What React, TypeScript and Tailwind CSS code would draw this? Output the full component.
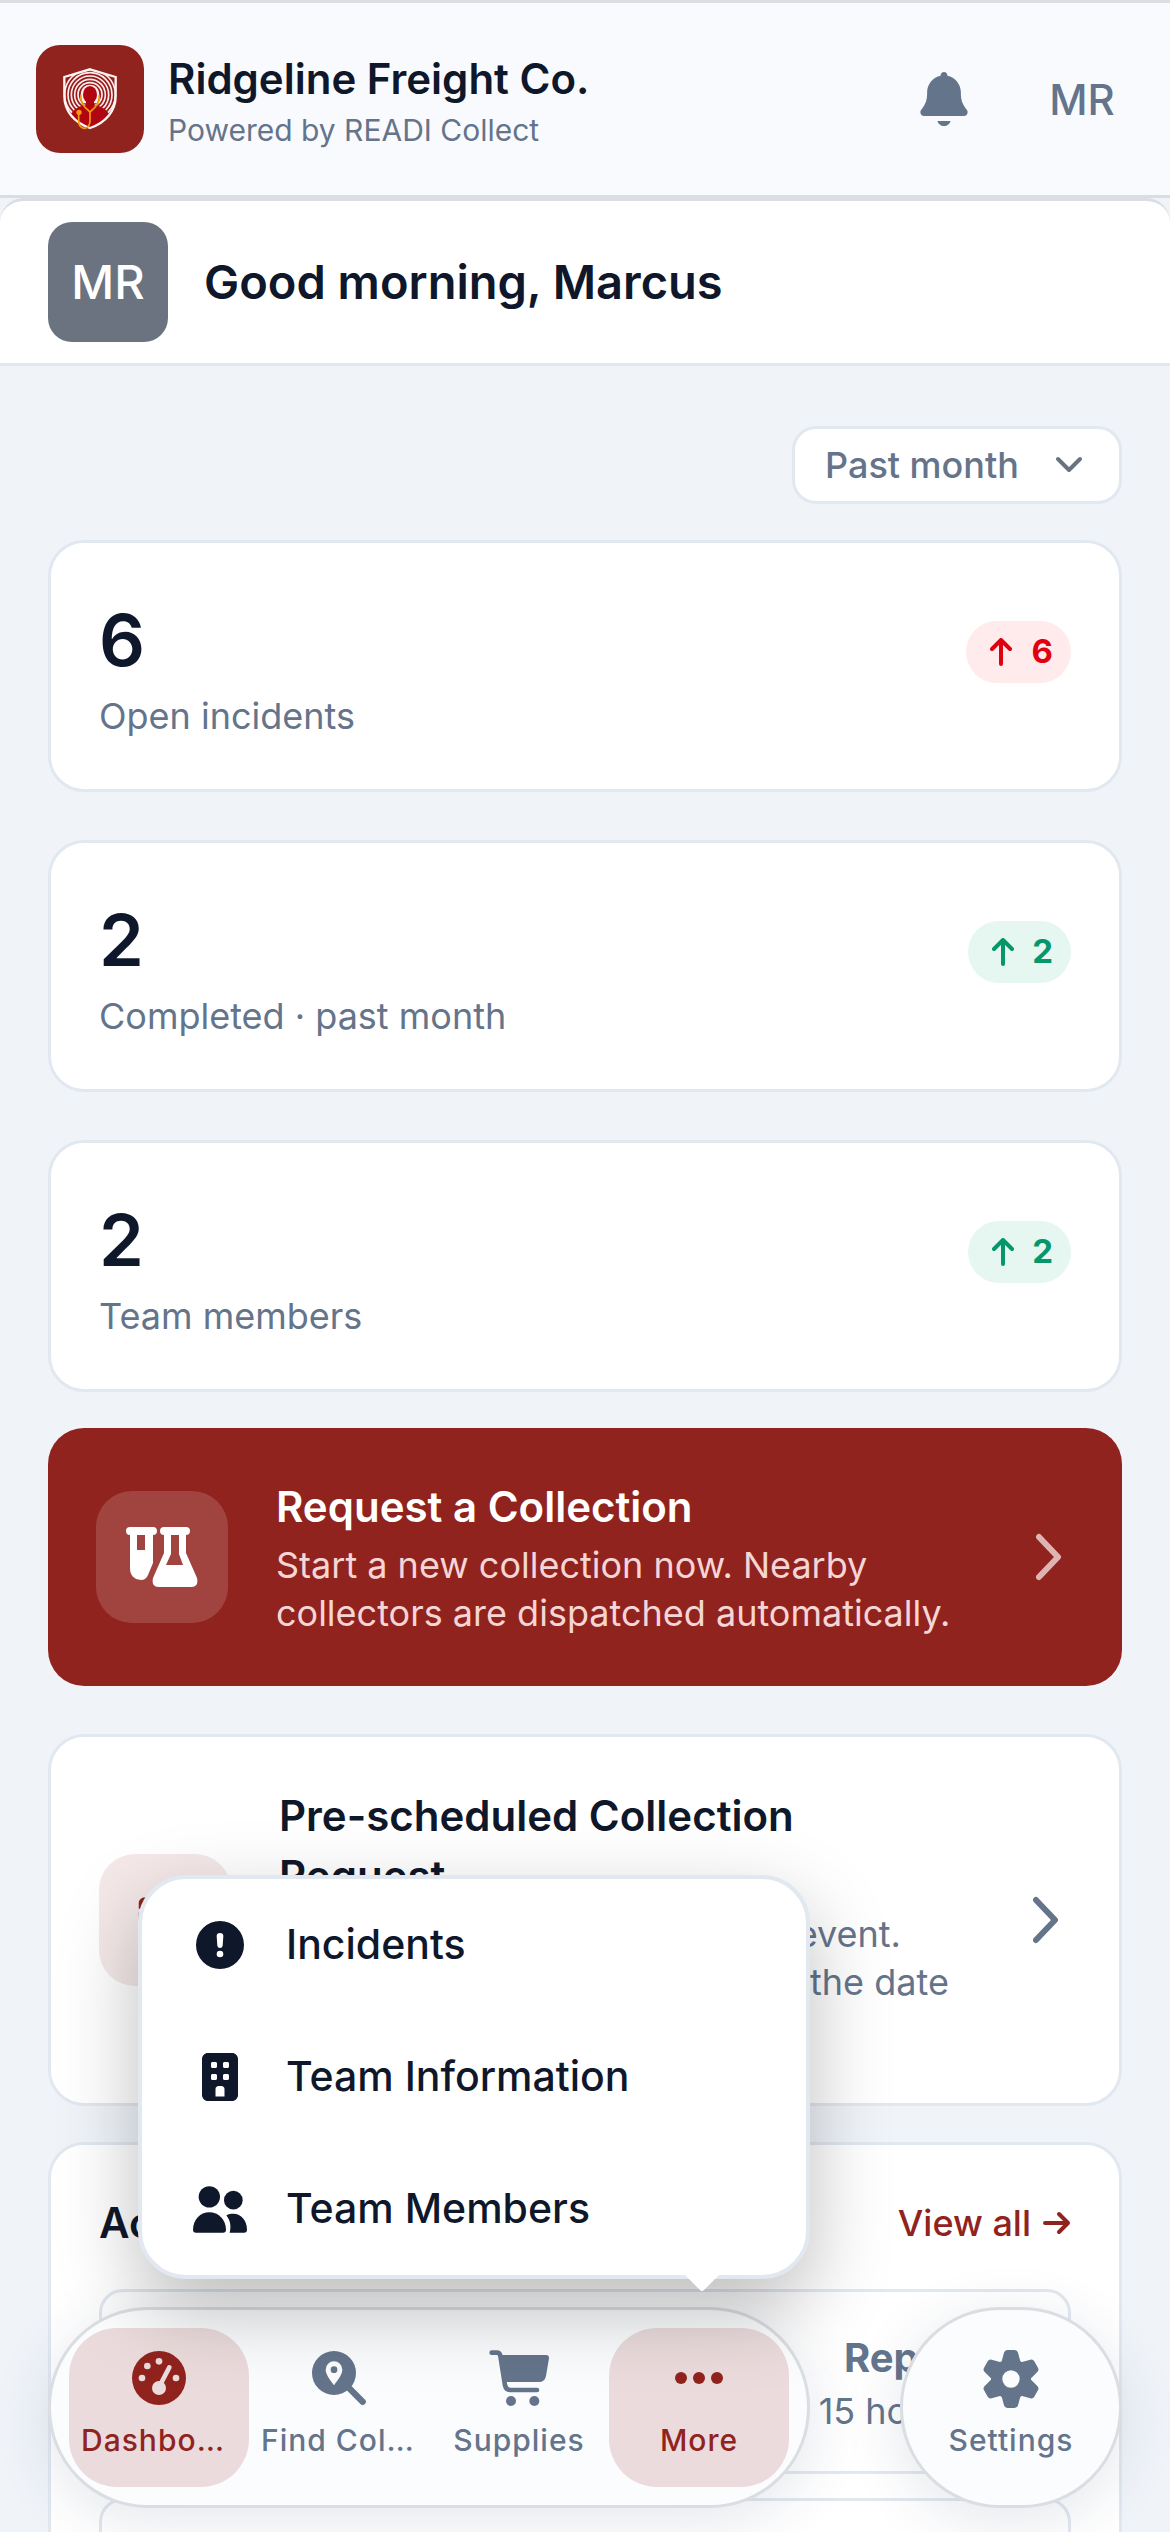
import type { ReactNode } from "react";
import { FaCalendarDays } from "react-icons/fa6";

const SHIELD = "M180 90 257 113V170C257 214 228 250 180 266 132 250 103 214 103 170V113Z";

function Shield() {
  return (
    <svg viewBox="99 86 162 186" className="h-[62px] w-[54px]" fill="none" aria-hidden="true">
      <defs>
        <clipPath id="shield-inner">
          <path d={SHIELD} />
        </clipPath>
      </defs>
      <path d={SHIELD} fill="#9a1a1a" />
      <g clipPath="url(#shield-inner)">
        <g stroke="#fdeeee" strokeWidth="5">
          <circle cx="180" cy="166" r="36" />
          <circle cx="180" cy="166" r="46" />
          <circle cx="180" cy="166" r="56" />
          <circle cx="180" cy="166" r="66" />
          <circle cx="180" cy="166" r="76" />
        </g>
        <path d="M112 262C116 224 132 206 160 198H200C228 206 244 224 248 262L180 280Z" fill="#b00612" />
        <path d="M160 192C146 172 150 136 180 136S214 172 200 192" fill="#fdeeee" />
        <ellipse cx="180" cy="166" rx="21" ry="26" fill="#b00612" />
        <path d="M168 184H192V206H168Z" fill="#b00612" />
      </g>
      <path d={SHIELD} stroke="#fff4f0" strokeWidth="7" />
      <path d="M153 167C148 186 160 202 180 218 200 202 212 186 207 167M180 218V244C180 276 143 274 146 242V222" stroke="#f59a0b" strokeWidth="5" />
      <circle cx="147" cy="219" r="8" fill="#f59a0b" />
    </svg>
  );
}

function BellIcon() {
  return (
    <svg viewBox="0 0 448 512" fill="currentColor" className="h-[54px] w-12" aria-hidden="true">
      <path d="M224 0c-17.700 0-32 14.300-32 32v3.200C119 50 64 114.600 64 192v21.700c0 48.100-16.400 94.800-46.400 132.400L7.800 358.300C2.700 364.600 0 372.400 0 380.500 0 400.100 15.900 416 35.500 416h376.900c19.600 0 35.500-15.900 35.500-35.500 0-8.100-2.700-15.900-7.800-22.200l-9.800-12.200C400.400 308.500 384 261.800 384 213.700V192c0-77.400-55-142-128-156.800V32c0-17.700-14.300-32-32-32zM162 464c7.100 27.600 32.200 48 62 48s54.900-20.400 62-48z" />
    </svg>
  );
}

function TubesIcon() {
  return (
    <svg viewBox="0 0 72 60" fill="currentColor" className="h-[60px] w-[72px]" aria-hidden="true">
      <path
        fillRule="evenodd"
        d="M4 0H27A4 4 0 0 1 27 8V36L22 48Q20 53 15 53Q4 52 4 41V8A4 4 0 0 1 4 0ZM11 8V23H19V8Z"
      />
      <path
        fillRule="evenodd"
        d="M38 0H60A4 4 0 0 1 60 8V26L71 51Q73 60 65 60H33Q25 60 27 51L38 26V8A4 4 0 0 1 38 0ZM45 8V27L40 38H57L53 27V8Z"
      />
    </svg>
  );
}

function GaugeIcon() {
  return (
    <svg viewBox="0 0 162 162" className="size-[54px]" aria-hidden="true">
      <mask id="gauge-cut">
        <rect width="162" height="162" fill="#fff" />
        <circle cx="30" cy="81" r="10" />
        <circle cx="46" cy="45" r="10" />
        <circle cx="81" cy="31" r="10" />
        <circle cx="132" cy="81" r="10" />
        <circle cx="81" cy="111" r="21" />
        <path d="M86 99 112 49" stroke="#000" strokeWidth="14" strokeLinecap="round" />
      </mask>
      <circle cx="81" cy="81" r="81" fill="currentColor" mask="url(#gauge-cut)" />
    </svg>
  );
}

function FindIcon() {
  return (
    <svg viewBox="0 0 162 162" fill="currentColor" className="size-[54px]" aria-hidden="true">
      <path d="M108 108 152 152" stroke="currentColor" strokeWidth="19" strokeLinecap="round" />
      <path
        fillRule="evenodd"
        d="M66 0a66 66 0 1 1 0 132a66 66 0 1 1 0-132ZM66 103C72 93 91 73 91 56A25 25 0 0 0 41 56C41 73 60 93 66 103Z"
      />
      <circle cx="66" cy="56" r="10" />
    </svg>
  );
}

function CartIcon() {
  return (
    <svg viewBox="0 0 180 168" fill="currentColor" className="h-14 w-[60px]" aria-hidden="true">
      <path d="M8 8H23Q32 8 34 17L48 106Q51 120 64 120H144" fill="none" stroke="currentColor" strokeWidth="14" strokeLinecap="round" />
      <path d="M28 15H171Q181 15 180 25L171 78Q167 96 150 96H44Z" />
      <circle cx="66" cy="153" r="15" />
      <circle cx="136" cy="153" r="15" />
    </svg>
  );
}

function DotsIcon() {
  return (
    <svg viewBox="0 0 48 12" fill="currentColor" className="h-3 w-12" aria-hidden="true">
      <circle cx="6" cy="6" r="6" />
      <circle cx="24" cy="6" r="6" />
      <circle cx="42" cy="6" r="6" />
    </svg>
  );
}

const TOOTH = "M-30-46-21-79Q-19-87-11-87H11Q19-87 21-79L30-46Z";

function GearIcon() {
  return (
    <svg viewBox="-84 -87 168 174" fill="currentColor" className="h-[58px] w-14" aria-hidden="true">
      <circle r="43" fill="none" stroke="currentColor" strokeWidth="34" />
      <path d={TOOTH} />
      <path d={TOOTH} transform="rotate(60)" />
      <path d={TOOTH} transform="rotate(120)" />
      <path d={TOOTH} transform="rotate(180)" />
      <path d={TOOTH} transform="rotate(240)" />
      <path d={TOOTH} transform="rotate(300)" />
    </svg>
  );
}

function AlertIcon() {
  return (
    <svg viewBox="0 0 144 144" fill="currentColor" className="size-12" aria-hidden="true">
      <path
        fillRule="evenodd"
        d="M72 0a72 72 0 1 1 0 144a72 72 0 1 1 0-144ZM62 45 64 74Q65 81 72 81T80 74L82 45Q82 36 72 36T62 45ZM72 89a10 10 0 1 0 0 20a10 10 0 1 0 0-20Z"
      />
    </svg>
  );
}

function BuildingIcon() {
  return (
    <svg viewBox="0 0 384 512" fill="currentColor" className="h-12 w-9" aria-hidden="true">
      <path
        fillRule="evenodd"
        d="M64 0C28.700 0 0 28.700 0 64V448c0 35.300 28.700 64 64 64H320c35.300 0 64-28.700 64-64V64c0-35.300-28.700-64-64-64ZM176 352h32c17.700 0 32 14.300 32 32v80H144V384c0-17.700 14.300-32 32-32ZM96 112c0-8.800 7.200-16 16-16h32c8.800 0 16 7.200 16 16v32c0 8.800-7.200 16-16 16H112c-8.800 0-16-7.200-16-16ZM240 96h32c8.800 0 16 7.200 16 16v32c0 8.800-7.200 16-16 16H240c-8.800 0-16-7.200-16-16V112c0-8.800 7.200-16 16-16ZM96 240c0-8.800 7.200-16 16-16h32c8.800 0 16 7.200 16 16v32c0 8.800-7.200 16-16 16H112c-8.800 0-16-7.200-16-16ZM240 224h32c8.800 0 16 7.200 16 16v32c0 8.800-7.200 16-16 16H240c-8.800 0-16-7.200-16-16V240c0-8.800 7.200-16 16-16Z"
      />
    </svg>
  );
}

function PeopleIcon() {
  return (
    <svg viewBox="0 0 162 140" fill="currentColor" className="h-[47px] w-[54px]" aria-hidden="true">
      <circle cx="49" cy="32" r="32" />
      <circle cx="121" cy="42" r="28" />
      <path d="M0 131C0 100 22 78 49 78S99 100 99 131Q99 140 90 140H9Q0 140 0 131Z" />
      <path d="M100 88C107 84 114 83 121 83 145 83 162 104 162 131Q162 140 153 140H110C115 120 112 102 100 88Z" />
    </svg>
  );
}

function Chevron({ className }: { className: string }) {
  return (
    <svg viewBox="0 0 26 48" fill="none" stroke="currentColor" strokeWidth="6" strokeLinecap="round" strokeLinejoin="round" className={className} aria-hidden="true">
      <path d="M3 4 22 24 3 44" />
    </svg>
  );
}

function ArrowUp() {
  return (
    <svg viewBox="0 0 22 28" fill="none" stroke="currentColor" strokeWidth="4" strokeLinecap="round" strokeLinejoin="round" className="h-7 w-[22px]" aria-hidden="true">
      <path d="M11 26V3M2 11 11 2 20 11" />
    </svg>
  );
}

function StatCard({ value, label, delta, bad }: { value: string; label: string; delta: string; bad?: boolean }) {
  return (
    <section className="flex items-start justify-between rounded-[36px] border-3 border-[#e2e8f0] bg-white px-12 pt-[57px] pb-[52px]">
      <div>
        <p className="text-[72px] leading-[80px] font-semibold">{value}</p>
        <p className="mt-[15px] text-4xl leading-[42px] text-[#64748b]">{label}</p>
      </div>
      <p
        className={
          bad
            ? "mt-[21px] flex h-[62px] items-center gap-5 rounded-full bg-[#ffebeb] pr-[18px] pl-6 text-[33px] font-bold text-[#df0010]"
            : "mt-[21px] flex h-[62px] items-center gap-[18px] rounded-full bg-[#e5f7f0] pr-[18px] pl-6 text-[33px] font-bold text-[#059669]"
        }
      >
        <ArrowUp />
        {delta}
      </p>
    </section>
  );
}

function ActivityCard() {
  return (
    <article className="flex h-[185px] items-start justify-end rounded-3xl border-3 border-[#e2e8f0] px-8 pt-10 text-[#64748b]">
      <div className="text-right">
        <p className="text-[40px] leading-[52px] font-bold">Reporting</p>
        <p className="text-[36px] leading-[54px]">15 hours ago</p>
      </div>
    </article>
  );
}

function NavItem({ icon, label, active }: { icon: ReactNode; label: string; active?: boolean }) {
  return (
    <button
      type="button"
      className={
        active
          ? "flex h-[159px] w-[180px] flex-col items-center rounded-[48px] bg-[#91231e]/15 px-3 pt-[22px] text-[#91231e]"
          : "flex h-[159px] w-[180px] flex-col items-center rounded-[48px] px-3 pt-[22px] text-[#64748b]"
      }
    >
      <span className="flex h-14 items-center">{icon}</span>
      <span className="mt-[14px] w-full truncate text-center text-[30px] leading-10 font-medium tracking-[1px]">{label}</span>
    </button>
  );
}

function MenuItem({ icon, label }: { icon: ReactNode; label: string }) {
  return (
    <button type="button" role="menuitem" className="flex h-33 w-full items-center gap-9 pl-12 text-left text-[41px] font-medium">
      <span className="flex w-[60px] justify-center">{icon}</span>
      {label}
    </button>
  );
}

export default function App() {
  return (
    <div className="relative h-screen overflow-hidden bg-[#f0f4f9] font-['Inter',sans-serif] text-[#0f172a]">
      <header className="flex h-[198px] items-center border-y-3 border-[#dadde1] bg-[#f9fafe] pr-7 pl-9">
        <div className="flex size-[108px] items-center justify-center rounded-3xl bg-[#91231e]">
          <Shield />
        </div>
        <div className="ml-6 flex-1 pt-2">
          <p className="text-[42px] leading-[54px] font-semibold">Ridgeline Freight Co.</p>
          <p className="text-[30px] leading-[48px] text-[#64748b]">Powered by READI Collect</p>
        </div>
        <button type="button" aria-label="Notifications" className="text-[#64748b]">
          <BellIcon />
        </button>
        <button type="button" className="ml-[54px] flex size-[120px] items-center justify-center rounded-full text-[42px] font-medium text-[#64748b]">
          MR
        </button>
      </header>

      <section className="flex h-[168px] items-center gap-9 rounded-t-3xl border-y-3 border-[#e2e8f0] border-t-[#dadde1] bg-white px-12">
        <div className="flex size-[120px] items-center justify-center rounded-3xl bg-[#6b7280] text-[47px] font-medium text-white">MR</div>
        <h1 className="text-[47px] font-semibold">Good morning, Marcus</h1>
      </section>

      <main className="flex flex-col px-12 pt-[60px]">
        <button type="button" className="flex h-[78px] w-[330px] items-center justify-between self-end rounded-3xl border-3 border-[#e2e8f0] bg-white pr-9 pl-[30px] text-[36px] font-medium text-[#64748b]">
          Past month
          <svg viewBox="0 0 28 18" fill="none" stroke="#6b7280" strokeWidth="4" strokeLinecap="round" strokeLinejoin="round" className="h-[18px] w-7" aria-hidden="true">
            <path d="M3 3 14 14 25 3" />
          </svg>
        </button>

        <div className="mt-9 flex flex-col gap-12">
          <StatCard value="6" label="Open incidents" delta="6" bad />
          <StatCard value="2" label="Completed · past month" delta="2" />
          <StatCard value="2" label="Team members" delta="2" />
        </div>

        <button type="button" className="mt-9 flex h-[258px] items-center rounded-[36px] bg-[#91231e] px-12 text-left text-white">
          <span className="flex size-33 items-center justify-center rounded-[36px] bg-white/15">
            <TubesIcon />
          </span>
          <span className="ml-12 block flex-1">
            <span className="block text-[42px] leading-[60px] font-semibold">Request a Collection</span>
            <span className="mt-1 block text-[36px] leading-[48px] text-[#f5d5d5]">Start a new collection now. Nearby collectors are dispatched automatically.</span>
          </span>
          <Chevron className="mr-3 ml-[72px] h-12 w-[26px] text-[#dfb5b4]" />
        </button>

        <button type="button" className="mt-12 flex h-[372px] items-center rounded-[36px] border-3 border-[#e2e8f0] bg-white px-12 text-left">
          <span className="flex size-33 items-center justify-center rounded-[36px] bg-[#f4e9e8] text-[#91231e]">
            <FaCalendarDays className="size-[60px]" />
          </span>
          <span className="ml-12 block flex-1">
            <span className="block text-[42px] leading-[60px] font-semibold">Pre-scheduled Collection Request</span>
            <span className="mt-1 block text-[36px] leading-[48px] text-[#64748b]">
              Schedule a collection for your event. Choose a location and confirm the date and time.
            </span>
          </span>
          <Chevron className="mr-3 ml-[72px] h-12 w-[26px] text-[#64748b]" />
        </button>

        <section className="mt-9 rounded-[36px] border-3 border-[#e2e8f0] bg-white px-12 pt-12 pb-12">
          <div className="flex items-center justify-between">
            <h2 className="text-[42px] leading-[60px] font-semibold">Activity</h2>
            <a href="#activity" className="flex items-center gap-3 text-[36px] font-medium text-[#91231e]">
              View all
              <svg viewBox="0 0 28 24" fill="none" stroke="currentColor" strokeWidth="4" strokeLinecap="round" strokeLinejoin="round" className="h-6 w-7" aria-hidden="true">
                <path d="M2 12H25M16 3 25 12 16 21" />
              </svg>
            </a>
          </div>
          <div className="mt-9 flex flex-col gap-6">
            <ActivityCard />
            <ActivityCard />
          </div>
        </section>
      </main>

      <div className="absolute inset-x-12 bottom-6 flex items-end justify-between">
        <div className="relative z-10">
          <nav aria-label="Main" className="flex items-center rounded-[100px] border-3 border-[#dadde1] bg-[#fbfcfe] p-[18px] shadow-[0_12px_60px_rgba(30,50,90,0.12)]">
            <NavItem icon={<GaugeIcon />} label="Dashboard" active />
            <NavItem icon={<FindIcon />} label="Find Collector" />
            <NavItem icon={<CartIcon />} label="Supplies" />
            <NavItem icon={<DotsIcon />} label="More" active />
          </nav>
          <div role="menu" className="absolute right-0 bottom-[229px] left-[90px] rounded-[48px] border-4 border-[#e2e8f0] bg-white shadow-[0_30px_80px_rgba(0,0,0,0.26)]">
            <MenuItem icon={<AlertIcon />} label="Incidents" />
            <MenuItem icon={<BuildingIcon />} label="Team Information" />
            <MenuItem icon={<PeopleIcon />} label="Team Members" />
            <svg viewBox="0 0 40 20" className="absolute right-[84px] -bottom-[17px] h-5 w-10" fill="#fff" aria-hidden="true">
              <path d="M0 0H40L22 18Q20 20 18 18Z" />
            </svg>
          </div>
        </div>
        <button type="button" className="flex h-[201px] w-[222px] flex-col items-center rounded-[100px] border-3 border-[#dadde1] bg-[#fbfcfe] pt-10 text-[#64748b] shadow-[0_12px_60px_rgba(30,50,90,0.12)]">
          <GearIcon />
          <span className="mt-3 text-[30px] leading-10 font-medium tracking-[1px]">Settings</span>
        </button>
      </div>
    </div>
  );
}
